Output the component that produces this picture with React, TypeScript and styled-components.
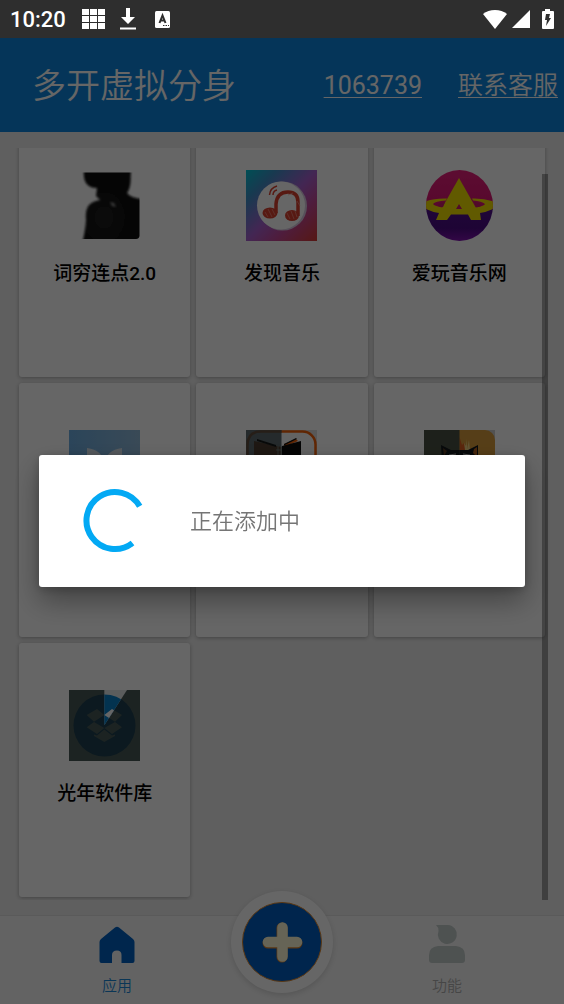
import React from 'react';
import styled, { createGlobalStyle } from 'styled-components';

const GlobalStyle = createGlobalStyle`
  *, *::before, *::after { box-sizing: border-box; }
  body {
    margin: 0;
    background: #eee;
    font-family: Roboto, "Noto Sans CJK SC", sans-serif;
  }
  button { font: inherit; border: 0; padding: 0; background: none; cursor: pointer; }
`;

const Screen = styled.div`
  display: flex;
  flex-direction: column;
  height: 100vh;
  background: #eee;
`;

const StatusBar = styled.div`
  display: flex;
  align-items: center;
  flex: none;
  height: 38px;
  padding: 0 10px;
  background: #2e2e2e;
  color: #fff;
`;

const Clock = styled.span`
  font-size: 22px;
  font-weight: 500;
  line-height: 24px;
  margin: 2px 16px 0 0;
`;

const StatusGroup = styled.div<{ $gap: number; $end?: boolean }>`
  display: flex;
  align-items: center;
  gap: ${p => p.$gap}px;
  margin-left: ${p => (p.$end ? 'auto' : '0')};
  svg { display: block; }
`;

const Header = styled.header`
  display: flex;
  align-items: center;
  flex: none;
  height: 94px;
  padding: 2px 6px 0 32px;
  background: #0d86de;
  color: #fff;
`;

const Title = styled.h1`
  margin: 0 auto 0 0;
  font-size: 34px;
  font-weight: 350;
  line-height: 48px;
  white-space: nowrap;
`;

const HeaderLink = styled.a<{ $weight: number }>`
  margin-left: 36px;
  color: inherit;
  font-size: 25px;
  font-weight: ${p => p.$weight};
  line-height: 32px;
  text-decoration: underline;
  text-decoration-thickness: 1px;
  text-underline-offset: 3px;
  white-space: nowrap;
`;

const Content = styled.main`
  position: relative;
  display: flex;
  flex: 1;
  min-height: 0;
  padding: 16px 0 15px;
`;

/* Reversed column keeps the list scrolled to its newest row. */
const Scroller = styled.div`
  display: flex;
  flex: 1;
  flex-direction: column-reverse;
  overflow-y: auto;
  scrollbar-width: none;
`;

const Grid = styled.div`
  display: grid;
  grid-template-columns: repeat(3, 1fr);
  gap: 6px;
  padding: 0 19px 3px;
`;

const Card = styled.button`
  display: flex;
  flex-direction: column;
  align-items: center;
  height: 254px;
  padding-top: 47px;
  border-radius: 3px;
  background: #fff;
  box-shadow: 0 1px 4px rgba(0, 0, 0, 0.3);
  svg { display: block; }
`;

const CardLabel = styled.span`
  margin-top: 19px;
  color: #000;
  font-size: 19px;
  font-weight: 500;
  line-height: 28px;
`;

const ScrollThumb = styled.div`
  position: absolute;
  top: 42px;
  right: 16px;
  bottom: 15px;
  width: 6px;
  background: rgba(0, 0, 0, 0.33);
`;

const BottomNav = styled.nav`
  position: relative;
  display: grid;
  grid-template-columns: 1fr 96px 1fr;
  flex: none;
  height: 89px;
  border-top: 1px solid #e2e2e2;
  background: #f8f8f8;
`;

const NavItem = styled.button<{ $active?: boolean }>`
  display: flex;
  flex-direction: column;
  align-items: center;
  padding-top: 8px;
  color: ${p => (p.$active ? '#1a88d8' : '#b0b0b0')};
  font-size: 15px;
  font-weight: 350;
  line-height: 22px;
  svg { display: block; margin-bottom: 11px; }
`;

const AddButton = styled.button`
  position: absolute;
  top: -25px;
  left: 50%;
  width: 102px;
  height: 102px;
  transform: translateX(-50%);
  border-radius: 50%;
  background: #fff;
  box-shadow: 0 2px 6px rgba(0, 0, 0, 0.15);
  svg { display: block; margin: auto; }
`;

const Scrim = styled.div`
  position: fixed;
  inset: 38px 0 0;
  display: flex;
  align-items: center;
  padding: 0 39px;
  background: rgba(0, 0, 0, 0.6);
`;

const Dialog = styled.div`
  display: flex;
  align-items: center;
  flex: 1;
  gap: 42px;
  height: 132px;
  padding: 0 41px;
  border-radius: 3px;
  background: #fff;
  box-shadow: 0 14px 28px rgba(0, 0, 0, 0.35), 0 2px 10px rgba(0, 0, 0, 0.2);
  svg { display: block; flex: none; }
`;

const DialogText = styled.p`
  margin: 2px 0 0;
  color: #757575;
  font-size: 22px;
  font-weight: 350;
  line-height: 32px;
`;

const SilhouetteIcon = () => (
  <svg width="71" height="71" viewBox="0 0 71 71">
    <defs>
      <clipPath id="silClip"><path d="M0 2.500H70.500V66Q70 69 67 69H0Z" /></clipPath>
      <radialGradient id="silFill" cx=".35" cy=".65" r=".5">
        <stop offset="0" stopColor="#202020" /><stop offset="1" stopColor="#0a0a0a" />
      </radialGradient>
      <filter id="silSoft"><feGaussianBlur stdDeviation="0.8" /></filter>
    </defs>
    <g clipPath="url(#silClip)">
      <path filter="url(#silSoft)" fill="url(#silFill)" d="M15 -2H62L61.500 12Q61 19 58 23Q61 28 76 29.500V74H13Q16.500 60 17 50Q16 40 20 35Q24 31 31 30L27 26L28 18Q20 18 17 13Q14 8 15 -2Z" />
      <path d="M41 32l4 1 2 4-4-1z" fill="#888" filter="url(#silSoft)" />
    </g>
  </svg>
);

const MusicIcon = () => (
  <svg width="71" height="71" viewBox="0 0 71 71">
    <defs>
      <linearGradient id="musBg" x1="0" y1="0" x2="1" y2="1">
        <stop offset="0" stopColor="#00c4d4" /><stop offset=".22" stopColor="#3f8fc8" />
        <stop offset=".5" stopColor="#a860d0" /><stop offset=".7" stopColor="#c44898" />
        <stop offset="1" stopColor="#d83c34" />
      </linearGradient>
    </defs>
    <rect width="71" height="71" fill="url(#musBg)" />
    <circle cx="36.500" cy="36" r="24.500" fill="#d9c8e0" />
    <circle cx="35" cy="35.500" r="24" fill="#fff" />
    <g fill="none" stroke="#d9402f">
      <path strokeWidth="3.500" d="M30 43V34Q31 22 42 22Q52 22 52 32V46" />
      <path strokeWidth="1.500" d="M23.500 25Q24 18 31 16M27 25Q27 21 31 20" />
    </g>
    <ellipse cx="24" cy="43" rx="7.500" ry="5.500" fill="#d9402f" />
    <ellipse cx="46" cy="45.500" rx="7" ry="5.500" fill="#d9402f" />
    <path d="M19 42l3 5M22 39l4 8M26 39l3 6M41 43l3 6M45 41l3 8M49 41l2 6M42 25l5-2M51 31l3 5" stroke="#f4a095" strokeWidth=".6" />
  </svg>
);

const PlanetIcon = () => (
  <svg width="71" height="71" viewBox="0 0 71 71">
    <defs>
      <clipPath id="plClip"><ellipse cx="35.500" cy="35.500" rx="33.500" ry="35.500" /></clipPath>
      <linearGradient id="plTop" x1="0" y1="0" x2="0" y2="1">
        <stop offset="0" stopColor="#e8207c" /><stop offset="1" stopColor="#d81470" />
      </linearGradient>
      <linearGradient id="plLow" x1="0" y1="0" x2="0" y2="1">
        <stop offset="0" stopColor="#50108c" /><stop offset=".6" stopColor="#4c0c84" /><stop offset="1" stopColor="#8010b0" />
      </linearGradient>
    </defs>
    <g clipPath="url(#plClip)">
      <rect width="71" height="40" fill="url(#plTop)" />
      <rect y="39" width="71" height="32" fill="url(#plLow)" />
      <path d="M0 32Q10 28 23 28.500L22 30.500Q11 31 9 34Q12 38 35 39Q59 38 61 34Q58 31 49 30.500L48 28.500Q60 28 71 32V38Q63 42 56 43L57 50H47L44 44.500H27L23 50H12L15 43Q7 42 0 38Z" fill="#f2e200" />
      <path d="M35 8L52 38Q36 42 18 38Z" fill="#f2e200" />
      <path d="M14 35Q15 32.500 21 32L19 37Q14 37 14 35ZM57 35Q56 32.500 50 32L52 37Q57 37 57 35ZM35 34L38 39H32Z" fill="#c81c68" />
    </g>
  </svg>
);

const PetalIcon = () => (
  <svg width="71" height="71" viewBox="0 0 71 71">
    <defs>
      <linearGradient id="petBg" x1="0" y1="0" x2="1" y2="0">
        <stop offset="0" stopColor="#6cace0" /><stop offset="1" stopColor="#90b8d8" />
      </linearGradient>
    </defs>
    <rect width="71" height="71" fill="url(#petBg)" />
    <path d="M26 18L35.500 29L45 18V30H26Z" fill="#80b4e0" />
    <path d="M18 18Q34 20 35.500 34Q37 20 53 18V54H18Z" fill="#d4dfe8" />
  </svg>
);

const BookIcon = () => (
  <svg width="71" height="71" viewBox="0 0 71 71">
    <rect width="71" height="71" fill="#dcdcdc" />
    <rect x="1.500" y="1.500" width="68" height="68" rx="13" fill="#f8f8f8" stroke="#f06008" strokeWidth="2.500" />
    <path d="M38 14L50 9L52 11L38 17Z" fill="#f06008" />
    <path d="M38 14L50 8L51 9L38 15.500Z" fill="#111" />
    <path d="M36 16L55 11V58L36 62Z" fill="#0c0c0c" />
    <rect width="35.500" height="71" fill="#5c696e" />
    <path d="M35.500 1.500H15Q1.500 1.500 1.500 15V56Q1.500 69.500 15 69.500H35.500" fill="none" stroke="#604c3c" strokeWidth="2.500" />
    <path d="M8 11L35.500 17V62L8 58Z" fill="#4c3c30" />
    <path d="M11 9L30 15V17L11 11Z" fill="#141818" />
    <path d="M32 16V34M35 16V34M30 20H36" stroke="#70807e" strokeWidth=".8" />
  </svg>
);

const CatIcon = () => (
  <svg width="71" height="71" viewBox="0 0 71 71">
    <rect width="71" height="71" fill="#ccc" />
    <rect width="71" height="71" rx="10" fill="#d89c3c" />
    <path d="M40 20V13L42 16L43 9V19L45 10L46 20Z" fill="#f0d080" />
    <path d="M35.500 20V7L38 15L40 13L41 20Z" fill="#e06020" />
    <path d="M16 15L27 20H44L54 15V48H18Z" fill="#10161a" />
    <path d="M50 19L53 17V27L49 23Z" fill="#b06020" />
    <path d="M0 0H35.500V71H0Z" fill="#4a5244" />
    <path d="M17 15L27 20H35.500V50H19Z" fill="#12191b" />
    <path d="M19 18L23 21L20 26Z" fill="#5a3a20" />
    <path d="M25 25L32 24M39 24L46 25" stroke="#b8b8b8" />
  </svg>
);

const boxShape =
  'M17.700 25L28 19L35.300 25L25 31.700ZM17.700 37.300L25 32L35.300 38L28 44ZM53 25L43 19L35.300 25L46 31.700ZM53 37.300L46 32L35.300 38L43 44ZM25 44.500L28 45.500L35.300 39.500L43 45.500L46 44.500V46L35.300 52L25 46Z';

const BoxIcon = () => (
  <svg width="71" height="71" viewBox="0 0 71 71">
    <defs><clipPath id="boxWedge"><path d="M35.300 35.300V0H58Z" /></clipPath></defs>
    <rect width="71" height="71" fill="#485856" />
    <circle cx="35.500" cy="35.500" r="31" fill="#1e4050" />
    <path d={boxShape} fill="#485856" />
    <g clipPath="url(#boxWedge)">
      <rect width="71" height="71" fill="#e4e8e8" />
      <circle cx="35.500" cy="35.500" r="31" fill="#0880c8" />
      <path d={boxShape} fill="#fff" />
    </g>
  </svg>
);

const apps = [
  { name: '词穷连点2.0', Icon: SilhouetteIcon },
  { name: '发现音乐', Icon: MusicIcon },
  { name: '爱玩音乐网', Icon: PlanetIcon },
  { name: '', Icon: PetalIcon },
  { name: '', Icon: BookIcon },
  { name: '', Icon: CatIcon },
  { name: '光年软件库', Icon: BoxIcon },
];

export default function App() {
  return (
    <>
      <GlobalStyle />
      <Screen>
        <StatusBar>
          <Clock>10:20</Clock>
          <StatusGroup $gap={15}>
            <svg width="23" height="21" viewBox="0 0 23 21" fill="#fff">
              {[0, 8, 16].map(x => [0, 7, 14].map(y => (
                <rect key={`${x}-${y}`} x={x} y={y} width="7" height="6" />
              )))}
            </svg>
            <svg width="16" height="22" viewBox="0 0 16 22" fill="#fff">
              <path d="M6 0h4v9h5l-7 7-7-7h5zM0 19.500h16v2H0z" />
            </svg>
            <svg width="19" height="17" viewBox="0 0 19 17">
              <rect x="4" width="15" height="17" rx="1.500" fill="#fff" />
              <path d="M8.500 12L11.500 4.500L14.500 12M9.500 9.500H13.500" fill="none" stroke="#2e2e2e" strokeWidth="2" />
              <path d="M12 14.500h1.500M14.500 14.500h1.500M17 14.500h1" stroke="#2e2e2e" strokeWidth="1.200" />
            </svg>
          </StatusGroup>
          <StatusGroup $gap={5} $end>
            <svg width="24" height="19" viewBox="0 0 24 19" fill="#fff">
              <path d="M0 4Q5 0 12 0T24 4L12 19Z" />
            </svg>
            <svg width="18" height="18" viewBox="0 0 18 18" fill="#fff">
              <path d="M18 0V18H0Z" />
            </svg>
            <svg width="19" height="20" viewBox="0 0 19 20">
              <path d="M10 0h5v2h3q1 0 1 1v16q0 1-1 1H8q-1 0-1-1V3q0-1 1-1h2z" fill="#fff" />
              <path d="M11 5h4l-1 4h2l-5 8 1-6h-2z" fill="#2e2e2e" />
            </svg>
          </StatusGroup>
        </StatusBar>

        <Header>
          <Title>多开虚拟分身</Title>
          <HeaderLink href="#account" $weight={400}>1063739</HeaderLink>
          <HeaderLink href="#support" $weight={350}>联系客服</HeaderLink>
        </Header>

        <Content>
          <Scroller>
            <Grid>
              {apps.map(({ name, Icon }, i) => (
                <Card key={i} type="button">
                  <Icon />
                  {name && <CardLabel>{name}</CardLabel>}
                </Card>
              ))}
            </Grid>
          </Scroller>
          <ScrollThumb />
        </Content>

        <BottomNav>
          <NavItem type="button" $active>
            <svg width="36" height="40" viewBox="0 0 36 40" fill="#0060c0">
              <path d="M16 3.500Q18 2 20 3.500L34 15Q35.500 16.500 35.500 18V37Q35.500 39 33.500 39H22.500V31Q22.500 26.500 18 26.500Q13 26.500 13 31V39H2.500Q.5 39 .5 37V18Q.5 16.500 2 15Z" />
            </svg>
            应用
          </NavItem>
          <span />
          <NavItem type="button">
            <svg width="36" height="40" viewBox="0 0 36 40" fill="#c4cccb">
              <path d="M7 1H19A9.500 9.500 0 1 1 9.500 7Q9.500 3 7 1ZM9 22H27Q36 23 36 31V36Q36 39 33 39H3Q0 39 0 36V31Q0 23 9 22Z" />
            </svg>
            功能
          </NavItem>
          <AddButton type="button" aria-label="添加">
            <svg width="80" height="80" viewBox="0 0 80 80">
              <circle cx="40" cy="40" r="39.500" fill="#005cc0" stroke="#e08a30" />
              <path d="M40 26V55M26 41H55" stroke="#e08a30" strokeWidth="11" strokeLinecap="round" />
              <path d="M40.500 25.500V54.500M26 40H55" stroke="#fffbd8" strokeWidth="10.500" strokeLinecap="round" />
            </svg>
          </AddButton>
        </BottomNav>
      </Screen>

      <Scrim>
        <Dialog role="dialog" aria-modal="true" aria-labelledby="dialog-text">
          <svg width="68" height="68" viewBox="0 0 68 68">
            <path d="M59.700 19.300A28.500 28.500 0 1 0 52.500 56" fill="none" stroke="#03a9f4" strokeWidth="6" />
          </svg>
          <DialogText id="dialog-text">正在添加中</DialogText>
        </Dialog>
      </Scrim>
    </>
  );
}
